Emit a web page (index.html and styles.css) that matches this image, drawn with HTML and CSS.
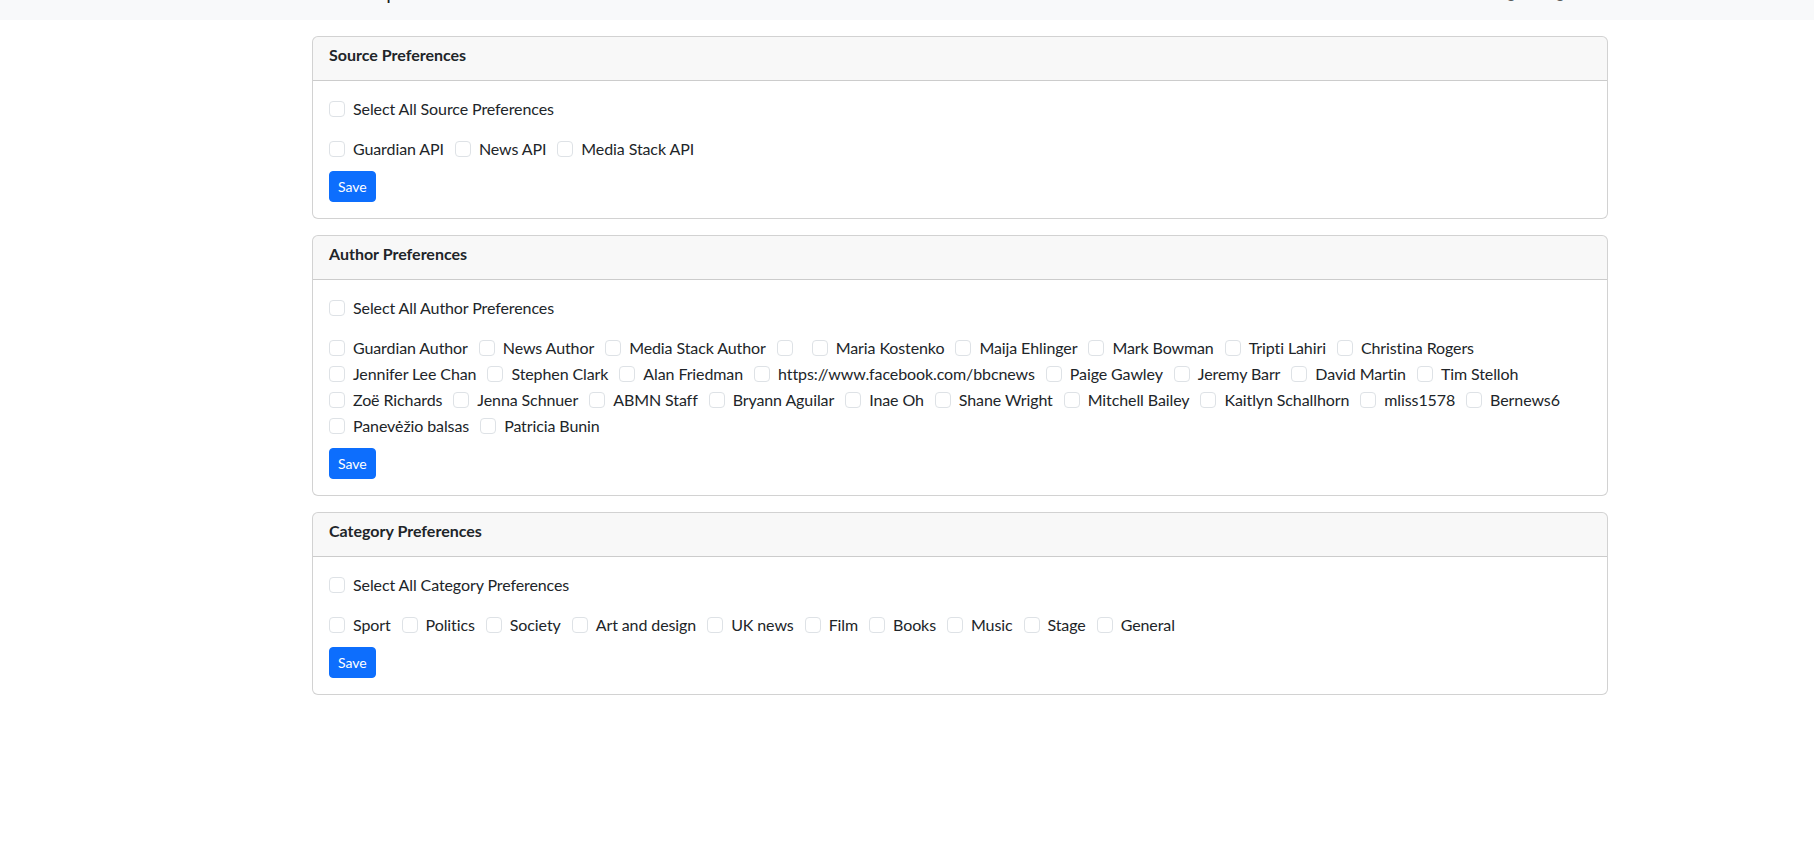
FILE: index.html
```html
<!DOCTYPE html>
<html lang="en">
<head>
<meta charset="utf-8">
<title>Preferences</title>
<link rel="stylesheet" href="styles.css">
</head>
<body>
<nav class="navbar">
  <div class="nav-inner">
    <a class="brand" href="#">NewsTop</a>
    <ul class="nav-links">
      <li><a href="#">Login</a></li>
      <li class="nav-second"><a href="#">Register</a></li>
    </ul>
  </div>
</nav>

<main class="main">
  <section class="card">
    <div class="card-header">Source Preferences</div>
    <div class="card-body">
      <label class="check select-all"><input type="checkbox" class="box"><span>Select All Source Preferences</span></label>
      <div class="options">
        <label class="check"><input type="checkbox" class="box"><span>Guardian API</span></label>
        <label class="check"><input type="checkbox" class="box"><span>News API</span></label>
        <label class="check"><input type="checkbox" class="box"><span>Media Stack API</span></label>
      </div>
      <button class="btn">Save</button>
    </div>
  </section>

  <section class="card">
    <div class="card-header">Author Preferences</div>
    <div class="card-body">
      <label class="check select-all"><input type="checkbox" class="box"><span>Select All Author Preferences</span></label>
      <div class="options">
        <label class="check"><input type="checkbox" class="box"><span>Guardian Author</span></label>
        <label class="check"><input type="checkbox" class="box"><span>News Author</span></label>
        <label class="check"><input type="checkbox" class="box"><span>Media Stack Author</span></label>
        <label class="check"><input type="checkbox" class="box"><span></span></label>
        <label class="check"><input type="checkbox" class="box"><span>Maria Kostenko</span></label>
        <label class="check"><input type="checkbox" class="box"><span>Maija Ehlinger</span></label>
        <label class="check"><input type="checkbox" class="box"><span>Mark Bowman</span></label>
        <label class="check"><input type="checkbox" class="box"><span>Tripti Lahiri</span></label>
        <label class="check"><input type="checkbox" class="box"><span>Christina Rogers</span></label>
        <label class="check"><input type="checkbox" class="box"><span>Jennifer Lee Chan</span></label>
        <label class="check"><input type="checkbox" class="box"><span>Stephen Clark</span></label>
        <label class="check"><input type="checkbox" class="box"><span>Alan Friedman</span></label>
        <label class="check"><input type="checkbox" class="box"><span>https://www.facebook.com/bbcnews</span></label>
        <label class="check"><input type="checkbox" class="box"><span>Paige Gawley</span></label>
        <label class="check"><input type="checkbox" class="box"><span>Jeremy Barr</span></label>
        <label class="check"><input type="checkbox" class="box"><span>David Martin</span></label>
        <label class="check"><input type="checkbox" class="box"><span>Tim Stelloh</span></label>
        <label class="check"><input type="checkbox" class="box"><span>Zoë Richards</span></label>
        <label class="check"><input type="checkbox" class="box"><span>Jenna Schnuer</span></label>
        <label class="check"><input type="checkbox" class="box"><span>ABMN Staff</span></label>
        <label class="check"><input type="checkbox" class="box"><span>Bryann Aguilar</span></label>
        <label class="check"><input type="checkbox" class="box"><span>Inae Oh</span></label>
        <label class="check"><input type="checkbox" class="box"><span>Shane Wright</span></label>
        <label class="check"><input type="checkbox" class="box"><span>Mitchell Bailey</span></label>
        <label class="check"><input type="checkbox" class="box"><span>Kaitlyn Schallhorn</span></label>
        <label class="check"><input type="checkbox" class="box"><span>mliss1578</span></label>
        <label class="check"><input type="checkbox" class="box"><span>Bernews6</span></label>
        <label class="check"><input type="checkbox" class="box"><span>Panevėžio balsas</span></label>
        <label class="check"><input type="checkbox" class="box"><span>Patricia Bunin</span></label>
      </div>
      <button class="btn">Save</button>
    </div>
  </section>

  <section class="card">
    <div class="card-header">Category Preferences</div>
    <div class="card-body">
      <label class="check select-all"><input type="checkbox" class="box"><span>Select All Category Preferences</span></label>
      <div class="options">
        <label class="check"><input type="checkbox" class="box"><span>Sport</span></label>
        <label class="check"><input type="checkbox" class="box"><span>Politics</span></label>
        <label class="check"><input type="checkbox" class="box"><span>Society</span></label>
        <label class="check"><input type="checkbox" class="box"><span>Art and design</span></label>
        <label class="check"><input type="checkbox" class="box"><span>UK news</span></label>
        <label class="check"><input type="checkbox" class="box"><span>Film</span></label>
        <label class="check"><input type="checkbox" class="box"><span>Books</span></label>
        <label class="check"><input type="checkbox" class="box"><span>Music</span></label>
        <label class="check"><input type="checkbox" class="box"><span>Stage</span></label>
        <label class="check"><input type="checkbox" class="box"><span>General</span></label>
      </div>
      <button class="btn">Save</button>
    </div>
  </section>
</main>
</body>
</html>
```
FILE: styles.css
```css
* { box-sizing: border-box; }

body {
  margin: 0;
  font-family: Lato, "Liberation Sans", sans-serif;
  font-size: 16px;
  line-height: 24px;
  color: #212529;
  background: #fff;
}

/* top navbar, page is scrolled so only the bottom strip shows */
.navbar {
  height: 20px;
  overflow: hidden;
  background: #f8f9fa;
}
.nav-inner {
  width: 1296px;
  margin-left: 312px;
  display: flex;
  align-items: flex-start;
}
.brand {
  font-size: 20px;
  line-height: 20px;
  margin: -18px 0 0 6px;
  color: rgba(0, 0, 0, .9);
  text-decoration: none;
}
.nav-links {
  list-style: none;
  margin: -16px 5px 0 auto;
  padding: 0;
  display: flex;
}
.nav-second {
  margin-left: -6px;
}
.nav-links a {
  display: block;
  padding: 0 8px;
  font-size: 16px;
  line-height: 16px;
  color: rgba(0, 0, 0, .65);
  text-decoration: none;
}

/* content */
.main {
  width: 1296px;
  margin: 16px 0 0 312px;
}

.card {
  border: 1px solid rgba(0, 0, 0, .175);
  border-radius: 6px;
  margin-bottom: 16px;
  background: #fff;
  overflow: hidden;
}
.card-header {
  background: rgba(33, 37, 41, .03);
  border-bottom: 1px solid rgba(0, 0, 0, .175);
  padding: 6px 16px 13px;
  font-weight: 700;
  line-height: 24px;
}
.card-body {
  padding: 16px;
}

.check {
  display: flex;
  align-items: flex-start;
  gap: 8px;
  height: 24px;
  cursor: pointer;
}
.check span {
  white-space: nowrap;
  letter-spacing: -0.1px;
}
.select-all {
  margin-bottom: 16px;
}

.box {
  appearance: none;
  -webkit-appearance: none;
  flex: none;
  width: 16px;
  height: 16px;
  margin: 4px 0 0;
  border: 1px solid #dee2e6;
  border-radius: 4px;
  background: #fff;
}

.options {
  display: flex;
  flex-wrap: wrap;
  column-gap: 11px;
}
.options .check {
  margin-bottom: 2px;
}

.btn {
  display: block;
  margin-top: 8px;
  height: 31px;
  padding: 4px 8px;
  border: 1px solid #0d6efd;
  border-radius: 4px;
  background: #0d6efd;
  color: #fff;
  font-family: inherit;
  font-size: 14px;
  line-height: 21px;
  cursor: pointer;
}
```
